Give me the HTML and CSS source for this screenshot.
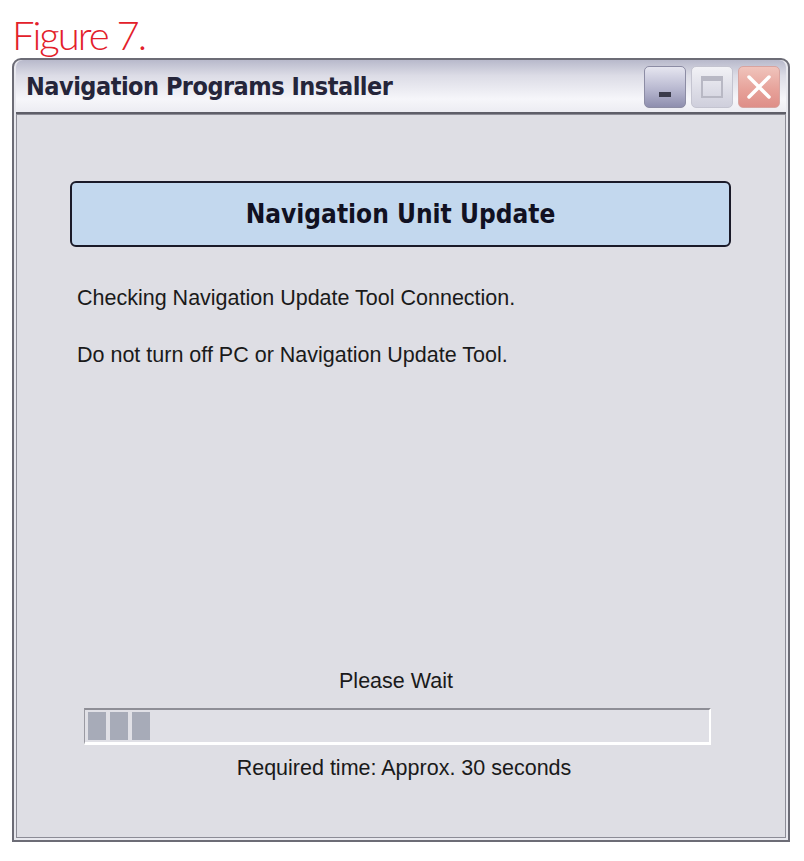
FILE: index.html
```html
<!DOCTYPE html>
<html>
    <head>
        <title>Navigation Programs Installer</title>
        <link rel="stylesheet" href="styles.css">
    </head>
    <body>
        <div class="figure">Figure 7.</div>
        <div class="window">
            <div class="titlebar">
                <div class="caption">Navigation Programs Installer</div>
                <div class="buttons">
                    <div class="btn min"><span></span></div>
                    <div class="btn max"><span></span></div>
                    <div class="btn close">
                        <svg width="26" height="26" viewBox="0 0 26 26">
                            <path d="M3 3 L23 23 M23 3 L3 23" stroke="#ffffff" stroke-width="3.5" stroke-linecap="round" fill="none"/>
                        </svg>
                    </div>
                </div>
            </div>
            <div class="content">
                <div class="header">Navigation Unit Update</div>
                <div class="msg">Checking Navigation Update Tool Connection.</div>
                <div class="msg">Do not turn off PC or Navigation Update Tool.</div>
                <div class="bottom">
                    <div class="wait">Please Wait</div>
                    <div class="progress">
                        <div class="block"></div>
                        <div class="block"></div>
                        <div class="block"></div>
                    </div>
                    <div class="time">Required time: Approx. 30 seconds</div>
                </div>
            </div>
        </div>
    </body>
</html>
```

FILE: styles.css
```css
body{
    margin: 0px;
    padding: 0px;
    background: #ffffff;
    font-family: "Liberation Sans", Arial, sans-serif;
}
.figure{
    font-family: "Lato", "Liberation Sans", sans-serif;
    font-weight: 300;
    font-size: 40px;
    color: #e3202a;
    height: 58px;
    line-height: 40px;
    padding-top: 15px;
    box-sizing: border-box;
    padding-left: 12px;
    letter-spacing: -2px;
}
.window{
    margin-left: 12px;
    width: 770px;
    height: 778px;
    border: 2px solid #6c6c76;
    border-radius: 9px 9px 0 0;
    background: #e8e8ee;
    padding: 0 2px 2px 2px;
    display: flex;
    flex-direction: column;
}
.titlebar{
    height: 52px;
    display: flex;
    align-items: center;
    justify-content: space-between;
    background: linear-gradient(#b8b9cb, #dcdce6 30%, #f6f6fa 75%, #ececf2);
    border-bottom: 2px solid #5e5e68;
    border-radius: 7px 7px 0 0;
    padding: 0 6px 0 10px;
}
.caption{
    font-family: "DejaVu Sans Condensed", "DejaVu Sans", sans-serif;
    font-weight: bold;
    font-size: 25px;
    color: #25253a;
    letter-spacing: -0.5px;
}
.buttons{
    display: flex;
    gap: 5px;
    margin-top: 2px;
}
.btn{
    width: 42px;
    height: 42px;
    border-radius: 5px;
    box-sizing: border-box;
    display: flex;
    align-items: center;
    justify-content: center;
}
.btn.min{
    background: linear-gradient(#e6e6f0, #b8b8d0 55%, #8e8eae);
    border: 1px solid #8c8ca4;
}
.btn.min span{
    width: 12px;
    height: 5px;
    background: #3a3a4a;
    margin-top: 14px;
}
.btn.max{
    background: linear-gradient(#f2f2f6, #dcdce6 60%, #cfcfdc);
    border: 1px solid #c4c4d0;
}
.btn.max span{
    width: 22px;
    height: 22px;
    box-sizing: border-box;
    border: 2px solid #b8b8c4;
    border-top-width: 5px;
}
.btn.close{
    background: linear-gradient(#f0c4bc, #e6a098 60%, #de8e88);
    border: 1px solid #d8a4a0;
}
.content{
    flex: 1;
    background: #dedee4;
    border: 1px solid #8c8c96;
    display: flex;
    flex-direction: column;
    padding: 66px 54px 0 60px;
}
.header{
    height: 62px;
    border: 2px solid #1a1a28;
    border-radius: 6px;
    background: #c3d8ee;
    font-family: "DejaVu Sans Condensed", "DejaVu Sans", sans-serif;
    font-weight: bold;
    font-size: 26px;
    color: #111122;
    display: flex;
    align-items: center;
    justify-content: center;
    margin-left: -7px;
}
.msg{
    font-size: 21.5px;
    color: #1a1a1a;
    margin-top: 40px;
    line-height: 22px;
}
.msg + .msg{
    margin-top: 35px;
}
.bottom{
    margin-top: auto;
    padding-bottom: 58px;
    display: flex;
    flex-direction: column;
    align-items: center;
}
.wait{
    font-size: 21.5px;
    color: #1a1a1a;
    line-height: 22px;
    margin-bottom: 16px;
    margin-right: 16px;
}
.progress{
    align-self: flex-start;
    width: 627px;
    height: 37px;
    box-sizing: border-box;
    border-top: 2px solid #8e8e96;
    border-left: 1px solid #9a9aa2;
    border-bottom: 3px solid #ffffff;
    border-right: 2px solid #ffffff;
    background: #e0e0e6;
    display: flex;
    gap: 4px;
    padding: 2px 3px;
    margin-left: 7px;
}
.block{
    width: 18px;
    background: #a7abb8;
}
.time{
    font-size: 21.5px;
    color: #1a1a1a;
    line-height: 22px;
    margin-top: 12px;
}
```
